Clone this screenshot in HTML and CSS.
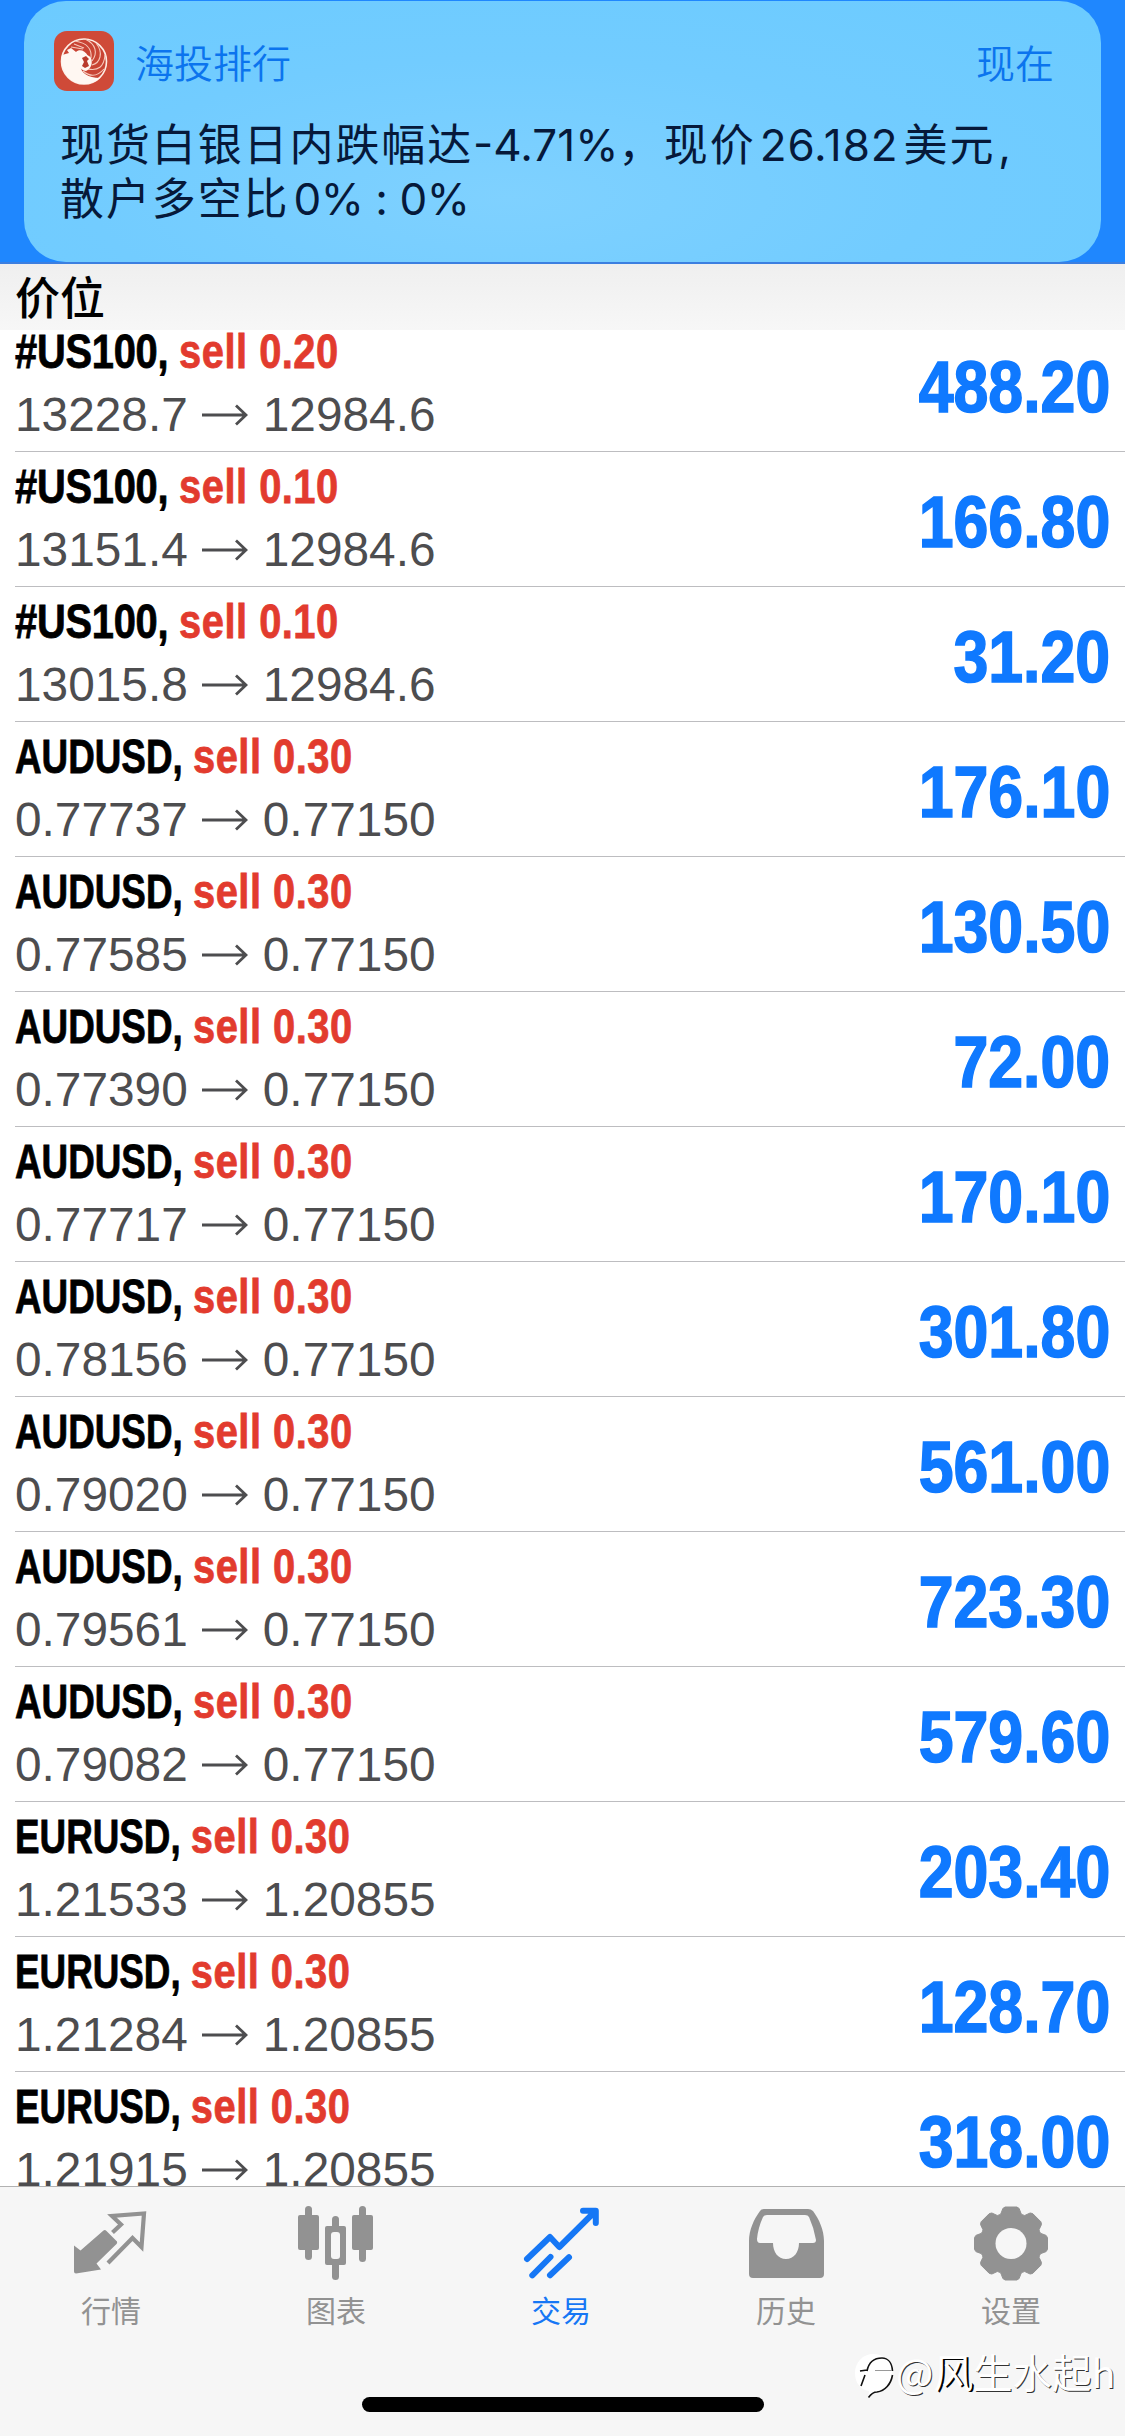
FILE: index.html
```html
<!DOCTYPE html>
<html lang="zh-CN">
<head>
<meta charset="utf-8">
<title>交易</title>
<link rel="stylesheet" href="styles.css">
</head>
<body>
<div class="screen">
  <header class="banner">
    <section class="notice">
      <div class="notice-head">
        <svg class="app-icon" viewBox="0 0 60 60">
          <rect width="60" height="60" rx="13" fill="#cf4a38"/>
          <circle cx="30" cy="30.500" r="22.500" fill="#c94434" stroke="#fdeee6" stroke-width="1.600"/>
          <path d="M8 24C5 38 14 52 29 53C37 53.500 43 50 46 47C34 47 27 42 26 34C25 27 29 23 34 25C31 19 25 18 22 21L17 17L13 19L15 22Z" fill="#fff7f2"/>
          <path d="M21 10C33 12 38 17 37 27M31 8C42 13 44 22 38 30M42 12C50 22 46 32 38 34M51 24C50 36 44 40 34 38M50 38C43 46 36 46 29 40M17 16L29 18M20 13L30 17" fill="none" stroke="#f6c9bb" stroke-width="1.100"/>
          <path d="M23 27C24 23 33 22 37 27C39 32 37 38 32 40C26 39 22 33 23 27Z" fill="#fff7f2"/>
          <path d="M28 27L32 25L35 28L33 30L35 35L31 37L28 35L30 31Z" fill="#b93a2c"/>
        </svg>
        <span class="app-name">海投排行</span>
        <time class="notice-time">现在</time>
      </div>
      <div class="notice-body">
        <p>现货白银日内跌幅达<span class="lat">-4.71%</span><span class="comma">，</span>现价<span class="lat gap">26.182</span>美元<span class="lat end">,</span></p>
        <p>散户多空比<span class="lat gap2">0% : 0%</span></p>
      </div>
    </section>
  </header>
  <h1 class="section-title">价位</h1>
  <main class="positions" id="positions"></main>
  <nav class="tabs">
    <a class="tab"><svg viewBox="0 0 78 78"><path d="M31.500 20.500Q33 19.500 34.500 21L45 31.500Q45.500 33 44.500 34L24.500 53.500L29 59.500L4 63.500Q2 63.500 2 61.500V35.500L8.500 40.500Z" fill="#929292"/><path d="M40.500 22.500L49 14.500L40 6L72 3.500L69.500 37L60.500 28L36 53" fill="none" stroke="#929292" stroke-width="4.200"/></svg><span>行情</span></a>
    <a class="tab"><svg viewBox="0 0 78 78"><g fill="#929292"><rect x="8" y="-4" width="7" height="54" rx="3.500"/><rect x="1" y="5" width="21" height="35" rx="2"/><rect x="62" y="-4" width="7" height="56" rx="3.500"/><rect x="55" y="5" width="21" height="35" rx="2"/><rect x="35" y="6" width="7" height="64" rx="3.500"/><rect x="28" y="16" width="21" height="39" rx="2"/></g><rect x="34" y="22" width="9" height="27" rx="3" fill="#f6f6f6"/></svg><span>图表</span></a>
    <a class="tab active"><svg viewBox="0 0 78 78"><g fill="none" stroke="#1677f5" stroke-width="6" stroke-linecap="round" stroke-linejoin="round"><path d="M5 49L28 27L37.300 37L72 2.500M61 .8H73.800V13M10.300 65.300L28.500 47M28 65.300L47 47.300"/></g><path d="M66 1H74V9Z" fill="#1677f5"/></svg><span>交易</span></a>
    <a class="tab"><svg viewBox="0 0 78 78"><path fill-rule="evenodd" d="M17-1H61Q64-1 66 1C72 9 77 20 77 31V64Q77 68 73 68H6Q2 68 2 64V31C2 20 7 9 13 1Q14-1 17-1ZM20 5Q17 5 16 7Q11 18 10 29Q10 33 13 33H26C26 42 31 49 39 49C47 49 52 42 52 33H66Q69 33 69 30Q67 18 62 7Q61 5 58 5Z" fill="#929292"/></svg><span>历史</span></a>
    <a class="tab"><svg viewBox="0 0 78 78"><path id="gear" fill="#929292" stroke="#929292" stroke-width="1" stroke-linejoin="round"/><circle cx="39" cy="33.500" r="15.500" fill="#f6f6f6"/></svg><span>设置</span></a>
  </nav>
  <div class="home-bar"></div>
  <div class="watermark"><svg viewBox="0 0 40 49"><path d="M18.500 4C29 4 37.500 12 37.500 23C37.500 34 31 41 22 42.500C18 43 16 45 13 48L14 41C5 40 0 32 0 23C0 12 8 4 18.500 4Z" fill="#fff"/><path d="M12 21C14 11 20 8 27 8C33 8 37 13 37.500 21M5 21L12 20M10 25L6 36M37.500 25C36 34 30 41 22 42C18 42 16 44 13.500 47.500" fill="none" stroke="#111" stroke-width="1.600"/><path d="M20 20.500H37" stroke="#999" stroke-width="1"/></svg><span class="wm-text">@<b>风</b>生水起h</span></div>
</div>
<script src="app.js"></script>
</body>
</html>
```
FILE: styles.css
```css
* { box-sizing: border-box; margin: 0; padding: 0; }
body { width: 1125px; height: 2436px; background: #fff; overflow: hidden; }
.screen { position: relative; display: flex; flex-direction: column; width: 1125px; height: 2436px; overflow: hidden; font-family: "Liberation Sans", "Noto Sans CJK SC", sans-serif; }
.banner { flex: none; height: 264px; padding: 1px 24px 0; background: #1f87fe; border-bottom: 2px solid #3c7fe0; }
.notice { height: 261px; border-radius: 42px; padding: 30px 47px 0 30px; background: radial-gradient(ellipse at 45% 75%, #7fd1ff 0%, #72ccff 50%, #6bcbff 100%); color: #06193a; }
.notice-head { display: flex; align-items: center; height: 60px; font: 350 39px/60px "Noto Sans CJK SC", sans-serif; color: #0b74ee; }
.app-icon { width: 60px; height: 60px; margin-right: 21px; }
.notice-time { margin-left: auto; }
.notice-body { margin-top: 24px; padding-left: 6px; white-space: nowrap; font: 400 44px/54px "Noto Sans CJK SC", sans-serif; letter-spacing: 1.900px; }
.notice-body p { height: 54px; }
.lat { font-family: Inter, sans-serif; font-size: 44px; line-height: 44px; letter-spacing: 0; }
.comma { letter-spacing: 1.500px; }
.gap { margin: 0 5px 0 4px; letter-spacing: .9px; }
.gap2 { margin-left: 4px; letter-spacing: -.5px; }
.end { margin-left: 3px; }
.section-title { flex: none; height: 66px; padding-left: 15px; background: linear-gradient(#efefef, #f7f7f7); font: 500 45px/64px "Noto Sans CJK SC", sans-serif; }
.positions { flex: 1; min-height: 0; margin-top: -13px; overflow: hidden; }
.position { display: flex; justify-content: space-between; height: 135px; margin-left: 15px; padding-right: 15px; border-bottom: 1px solid #bdbdc0; }
.deal { font-size: 48px; font-weight: 700; line-height: 56px; height: 56px; margin-top: 7px; white-space: pre; transform: scaleX(.83); transform-origin: left; -webkit-text-stroke: .8px; }
.symbol { letter-spacing: -.3px; }
.pair { display: inline-block; margin-right: -17.500px; transform: scaleX(.924); transform-origin: left; }
.side { color: #e23b2e; letter-spacing: .6px; }
.prices { display: flex; align-items: center; font-size: 47.800px; line-height: 56px; margin-top: 7px; color: #4d4d4f; }
.arrow { width: 46px; height: 22px; margin: 0 15px 0 14px; fill: none; stroke: #4d4d4f; stroke-width: 2.800; }
.profit { align-self: center; font-size: 72px; font-weight: 700; line-height: 80px; margin-top: 5px; color: #0f79ff; transform: scaleX(.87); transform-origin: right; -webkit-text-stroke: 1.600px; }
.tabs { flex: none; display: flex; height: 250px; margin: 0; background: #f6f6f6; border-top: 1px solid #b2b2b2; }
.tab { flex: 1; display: flex; flex-direction: column; align-items: center; padding: 23px 3px 0 0; color: #929292; font: 400 30px/40px "Noto Sans CJK SC", sans-serif; }
.tab svg { width: 78px; height: 78px; overflow: visible; margin-bottom: 1px; }
.tab.active { color: #1677f5; }
.home-bar { position: absolute; left: 362px; top: 2397px; width: 402px; height: 15px; border-radius: 8px; background: #000; }
.watermark { position: absolute; left: 855px; top: 2350px; display: flex; white-space: nowrap; color: #fff; font: 400 39.500px/42px "Noto Sans CJK SC", sans-serif; text-shadow: 1px 1px 0 #333; }
.watermark svg { width: 40px; height: 49px; margin-right: 1px; }
.watermark b { font-weight: 400; text-shadow: 2px 1px 0 #000; }
```
FILE: app.js
```js
const deals = [
  ["#US100", "0.20", "13228.7", "12984.6", "488.20"],
  ["#US100", "0.10", "13151.4", "12984.6", "166.80"],
  ["#US100", "0.10", "13015.8", "12984.6", "31.20"],
  ["AUDUSD", "0.30", "0.77737", "0.77150", "176.10"],
  ["AUDUSD", "0.30", "0.77585", "0.77150", "130.50"],
  ["AUDUSD", "0.30", "0.77390", "0.77150", "72.00"],
  ["AUDUSD", "0.30", "0.77717", "0.77150", "170.10"],
  ["AUDUSD", "0.30", "0.78156", "0.77150", "301.80"],
  ["AUDUSD", "0.30", "0.79020", "0.77150", "561.00"],
  ["AUDUSD", "0.30", "0.79561", "0.77150", "723.30"],
  ["AUDUSD", "0.30", "0.79082", "0.77150", "579.60"],
  ["EURUSD", "0.30", "1.21533", "1.20855", "203.40"],
  ["EURUSD", "0.30", "1.21284", "1.20855", "128.70"],
  ["EURUSD", "0.30", "1.21915", "1.20855", "318.00"]
];
const arrow = '<svg class="arrow" viewBox="0 0 46 22"><path d="M0 11H44M34 1.500L44 11L34 20.500"/></svg>';
document.getElementById("positions").innerHTML = deals.map(([s, v, a, b, p]) =>
  `<article class="position"><div><div class="deal"><span class="${s[0] === "#" ? "symbol" : "pair"}">${s}, </span><span class="side">sell ${v}</span></div><div class="prices"><span>${a}</span>${arrow}<span>${b}</span></div></div><div class="profit">${p}</div></article>`
).join("");

// Eight-toothed cog outline, centred at (39, 33.5).
const pts = [];
for (let i = 0; i < 8; i++) {
  for (const [da, r] of [[-22.5, 31], [-19, 31.2], [-13, 36], [-9, 37], [9, 37], [13, 36], [19, 31.2]]) {
    const t = (i * 45 + da) * Math.PI / 180;
    pts.push((39 + r * Math.sin(t)).toFixed(1) + " " + (33.5 - r * Math.cos(t)).toFixed(1));
  }
}
document.getElementById("gear").setAttribute("d", "M" + pts.join("L") + "Z");
```
